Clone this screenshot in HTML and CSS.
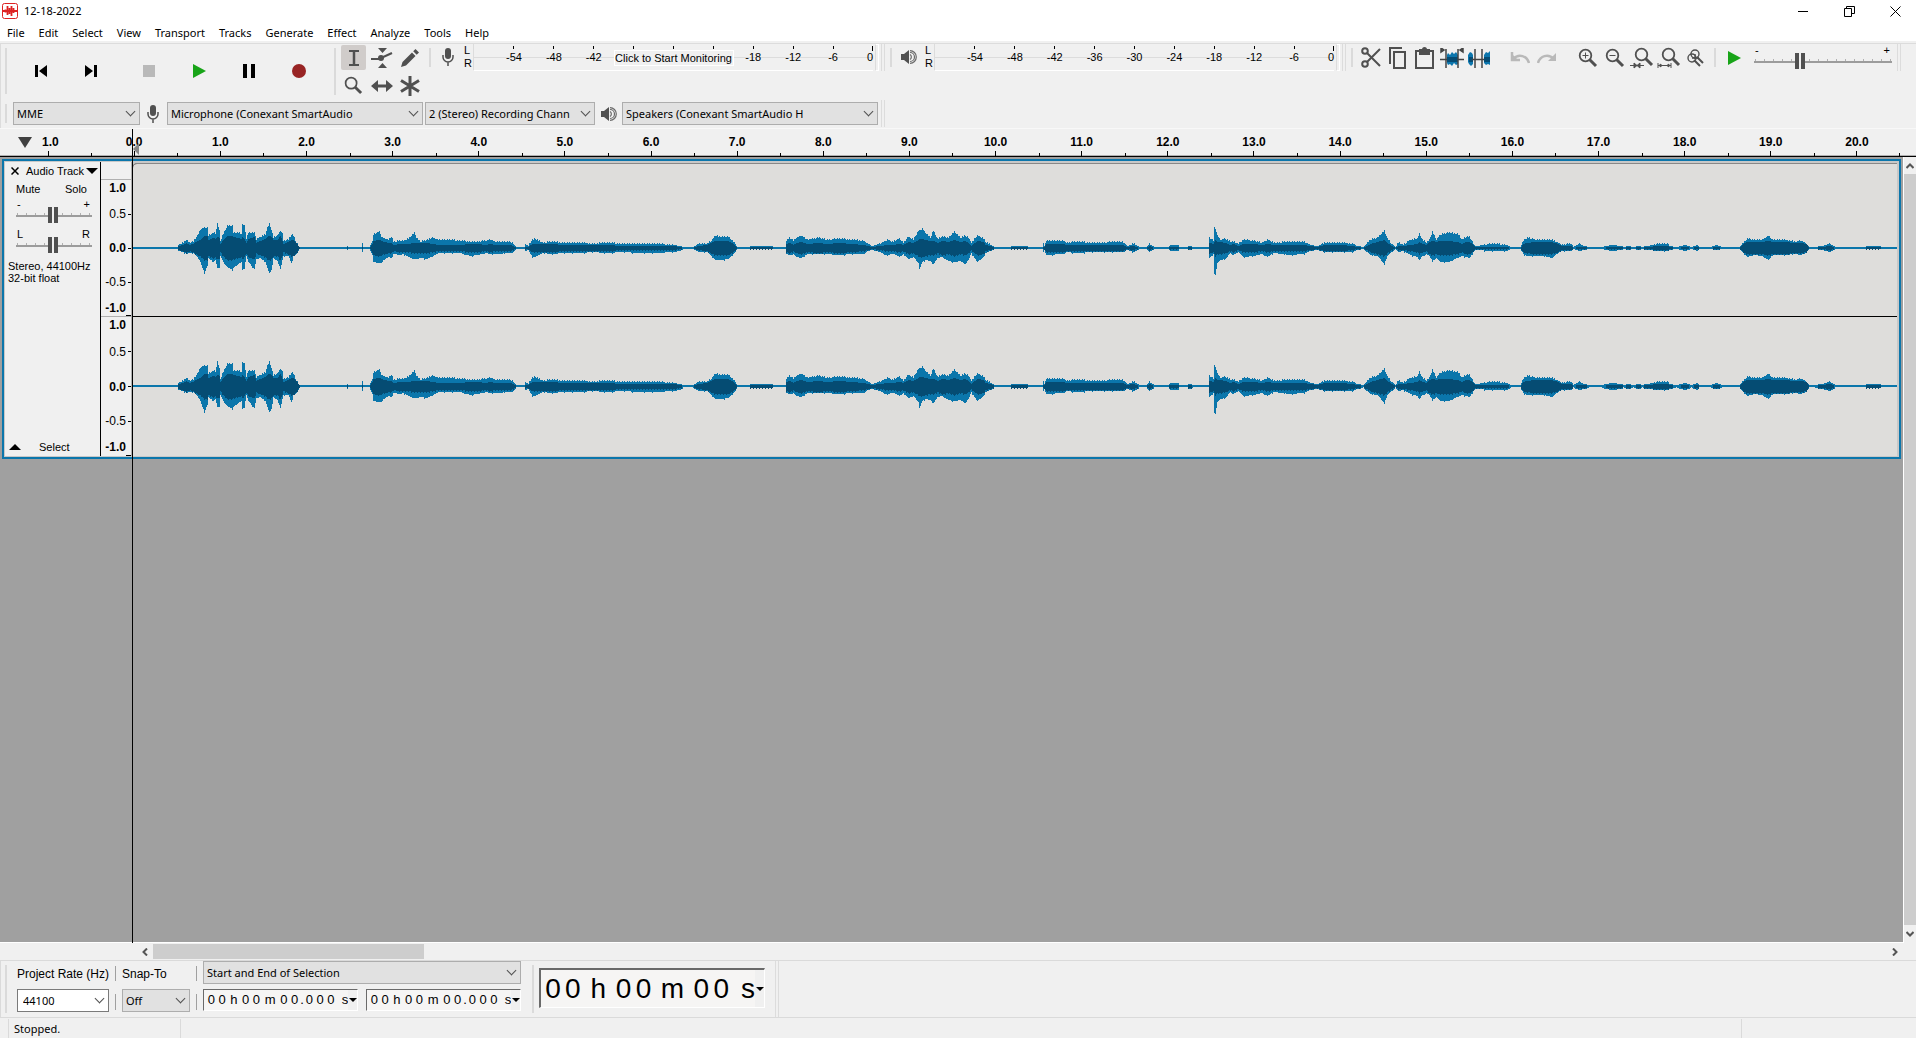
FILE: index.html
```html
<!DOCTYPE html>
<html lang="en">
<head>
    <meta charset="UTF-8">
    <meta name="viewport" content="width=device-width, initial-scale=1.0">
    <title>12-18-2022</title>
    <link rel="stylesheet" href="styles.css">
</head>
<body>

<header class="titlebar">
    <svg class="app-icon" viewBox="0 0 16 16"><rect x="0.5" y="0.5" width="15" height="15" rx="2" fill="#fff" stroke="#d22" /><path d="M1 8h14M3.5 6.500v3M5.500 3v9M7.500 5v6M9.500 3v10M11.500 5v5M13 7v2" stroke="#d22" stroke-width="1.800" fill="none"/></svg>
    <h1>12-18-2022</h1>
    <div class="window-controls">
        <button aria-label="Minimize"><svg width="11" height="11"><path d="M0 5.500h10" stroke="#000"/></svg></button>
        <button aria-label="Restore"><svg width="11" height="11" fill="none" stroke="#000"><path d="M0.500 2.500h7v8h-7zM2.500 2.500v-2h8v7h-3"/></svg></button>
        <button aria-label="Close"><svg width="11" height="11" stroke="#000"><path d="M0.500 0.500l10 10M10.500 0.500l-10 10"/></svg></button>
    </div>
</header>

<nav class="menubar">
    <a href="#">File</a>
    <a href="#">Edit</a>
    <a href="#">Select</a>
    <a href="#">View</a>
    <a href="#">Transport</a>
    <a href="#">Tracks</a>
    <a href="#">Generate</a>
    <a href="#">Effect</a>
    <a href="#">Analyze</a>
    <a href="#">Tools</a>
    <a href="#">Help</a>
</nav>

<!-- shared icons -->
<svg class="defs" width="0" height="0">
    <symbol id="mic" viewBox="0 0 12 18"><rect x="3" y="0" width="6" height="11" rx="3" fill="#505050"/><path d="M1 7v2a5 5 0 0 0 10 0V7M6 14v4" fill="none" stroke="#505050" stroke-width="1.500"/></symbol>
    <symbol id="speaker" viewBox="0 0 16 14"><path d="M0 4h3l5-4v14l-5-4H0z" fill="#505050"/><path d="M9 4.500a3 3 0 0 1 0 5M9 2.500a4.500 4.500 0 0 1 0 9M9 0.700a6.300 6.300 0 0 1 0 12.600" fill="none" stroke="#6a6a6a" stroke-width="1.200"/></symbol>
    <symbol id="lens" viewBox="0 0 20 20"><circle cx="7.500" cy="7.500" r="5.800" fill="none" stroke="#505050" stroke-width="1.800"/><path d="M11.500 11.500l6.500 6.500" stroke="#505050" stroke-width="3"/></symbol>
</svg>

<section class="dock">
    <div class="toolbar-row">
        <div class="transport">
            <span class="grip"></span>
            <button aria-label="Skip to Start"><svg width="12" height="12"><path d="M0 0h3v12H0zM12 0v12L4 6z"/></svg></button>
            <button aria-label="Skip to End"><svg width="12" height="12"><path d="M9 0h3v12H9zM0 0v12l8-6z"/></svg></button>
            <button aria-label="Stop" class="stop"><svg width="12" height="12"><path d="M0 0h12v12H0z" fill="#b9b9b9"/></svg></button>
            <button aria-label="Play"><svg width="13" height="14"><path d="M0 0v14l13-7z" fill="#18a418"/></svg></button>
            <button aria-label="Pause"><svg width="12" height="14"><path d="M0 0h4v14H0zM8 0h4v14H8z"/></svg></button>
            <button aria-label="Record"><svg width="14" height="14"><circle cx="7" cy="7" r="7" fill="#982424"/></svg></button>
        </div>

        <div class="toolset">
            <span class="grip"></span>
            <div class="tools">
                <button class="active" aria-label="Selection Tool"><svg width="12" height="16" fill="none" stroke="#505050"><path d="M1 1h10M1 15h10" stroke-width="2"/><path d="M6 1v14" stroke-width="2.500"/></svg></button>
                <button aria-label="Envelope Tool"><svg width="22" height="22"><path d="M7 1h9l-4.500 5zM7 21h9l-4.500-5z" fill="#505050"/><path d="M0 12h8l13-6" fill="none" stroke="#505050" stroke-width="2.200"/><circle cx="10" cy="11" r="3" fill="#505050"/></svg></button>
                <button aria-label="Draw Tool"><svg width="18" height="18" fill="#505050"><path d="M0 18l1.500-5L11 3.500 14.500 7 5 16.500zM12.200 2.300L14.500 0 18 3.500l-2.300 2.300z"/></svg></button>
                <button aria-label="Zoom Tool"><svg width="19" height="19"><use href="#lens"/></svg></button>
                <button aria-label="Time Shift Tool"><svg width="22" height="12"><path d="M0 6l7-6v4.500h8V0l7 6-7 6V7.500H7V12z" fill="#505050"/></svg></button>
                <button aria-label="Multi-Tool"><svg width="20" height="20" stroke="#505050" stroke-width="3"><path d="M10 0v20M1 4.500l18 11M19 4.500l-18 11"/></svg></button>
            </div>
        </div>

        <div class="bar">
            <span class="grip"></span>
            <button class="meter-icon" aria-label="Record Meter"><svg width="12" height="18"><use href="#mic"/></svg></button>
            <div class="lr"><span>L</span><span>R</span></div>
            <div class="meter">
                <div class="scale"></div>
                <button class="monitor">Click to Start Monitoring</button>
            </div>
            <span class="clip"></span>
            <span class="bar-end"></span>
        </div>

        <div class="bar">
            <span class="grip"></span>
            <button class="meter-icon" aria-label="Playback Meter"><svg width="16" height="14"><use href="#speaker"/></svg></button>
            <div class="lr"><span>L</span><span>R</span></div>
            <div class="meter"><div class="scale"></div></div>
            <span class="clip"></span>
            <span class="bar-end"></span>
        </div>

        <div class="bar edit">
            <span class="grip"></span>
            <div class="group">
                <button aria-label="Cut"><svg width="20" height="21" fill="none" stroke="#505050" stroke-width="2"><circle cx="4" cy="4" r="2.800"/><circle cx="4" cy="17" r="2.800"/><path d="M6 6l13 13M6 15L19 2"/></svg></button>
                <button aria-label="Copy"><svg width="18" height="22" fill="none" stroke="#505050" stroke-width="2"><path d="M1 17V1h12M5 5h11v16H5z"/></svg></button>
                <button aria-label="Paste"><svg width="19" height="22" fill="none" stroke="#505050" stroke-width="2"><path d="M1 4h17v17H1z"/><path d="M5 3h9v4H5z" fill="#505050"/><circle cx="9.500" cy="2.500" r="1.500"/></svg></button>
                <button aria-label="Trim"><svg width="24" height="20"><path d="M7 7l1-2 2 2 2-3 2 2 2-2 2 3v9l-2 1-2-2-2 3-2-2-2 1-1-2z" fill="#0c76ad"/><path d="M7 9h11v5H7z" fill="#064c74"/><path d="M6 1v19M18 1v19M0 11.500h7M18 11.500h6M1 0l3 2-3 2zM23 0l-3 2 3 2z" stroke="#444" fill="#444" stroke-width="1.500"/></svg></button>
                <button aria-label="Silence"><svg width="22" height="20"><path d="M0 7l2-3 2 1 1 2v9l-2 2-2-2-1-2zM16 7l2-3 2 1 2-2v14l-2-1-2 1-2-2z" fill="#0c76ad"/><path d="M1 9h4v5H1zM16 9h6v5h-6z" fill="#064c74"/><path d="M7 1v19M14 1v19M4 11.500h12" stroke="#444" stroke-width="1.500"/></svg></button>
            </div>
            <div class="group">
                <button aria-label="Undo"><svg width="20" height="12"><path d="M2 0v8h8M3 7c6-6 14-3 16 4" fill="none" stroke="#b9b9b9" stroke-width="2.500"/><path d="M1 1v8h8z" fill="#b9b9b9"/></svg></button>
                <button aria-label="Redo"><svg width="20" height="12"><path d="M17 7C11 1 3 4 1 11" fill="none" stroke="#b9b9b9" stroke-width="2.500"/><path d="M19 1v8h-8z" fill="#b9b9b9"/></svg></button>
            </div>
            <div class="group">
                <button aria-label="Zoom In"><svg width="20" height="20"><use href="#lens"/><path d="M4.500 7.500h6M7.500 4.500v6" stroke="#505050"/></svg></button>
                <button aria-label="Zoom Out"><svg width="20" height="20"><use href="#lens"/><path d="M4.500 7.500h6" stroke="#505050"/></svg></button>
                <button aria-label="Fit Selection"><svg width="24" height="22"><use href="#lens" x="4" width="20" height="20"/><path d="M0 18.500h14M4 16l3 2.500L4 21zM10 16l-3 2.500 3 2.500z" stroke="#505050" fill="#505050"/></svg></button>
                <button aria-label="Fit Project"><svg width="24" height="22"><use href="#lens" x="4" width="20" height="20"/><path d="M1 16v5M14 16v5M1 18.500h13M4 17l-2 1.500L4 20zM11 17l2 1.500-2 1.500z" stroke="#505050" fill="#505050"/></svg></button>
                <button aria-label="Zoom Toggle"><svg width="18" height="18" fill="none" stroke="#505050" stroke-width="1.400"><circle cx="8" cy="5" r="4"/><circle cx="5" cy="9" r="4"/><path d="M5 9h7M8 5v5"/><path d="M10 8l6 6M7 11l6 6" stroke-width="2"/></svg></button>
            </div>
        </div>

        <div class="bar speed">
            <span class="grip"></span>
            <button class="play-speed" aria-label="Play-at-Speed"><svg width="13" height="14"><path d="M0 0v14l13-7z" fill="#18a418"/></svg></button>
            <label class="slider">
                <span class="slider-ends"><span>-</span><span>+</span></span>
                <input type="range" min="0" max="100" value="32" aria-label="Playback Speed">
            </label>
            <span class="bar-end"></span>
        </div>
    </div>

    <div class="toolbar-row devices">
        <span class="grip"></span>
        <div class="drop host"><select aria-label="Audio Host"><option>MME</option></select></div>
        <svg class="device-icon" width="12" height="18"><use href="#mic"/></svg>
        <div class="drop"><select aria-label="Recording Device"><option>Microphone (Conexant SmartAudio</option></select></div>
        <div class="drop channels"><select aria-label="Recording Channels"><option>2 (Stereo) Recording Chann</option></select></div>
        <svg class="device-icon speaker" width="16" height="14"><use href="#speaker"/></svg>
        <div class="drop"><select aria-label="Playback Device"><option>Speakers (Conexant SmartAudio H</option></select></div>
        <span class="bar-end"></span>
    </div>
</section>

<main class="project">
    <div class="timeline" id="timeline"></div>

    <div class="workspace">
        <div class="tracks">
            <article class="track">
                <div class="track-panel">
                    <div class="track-title">
                        <button aria-label="Close track"><svg width="8" height="8" stroke="#000" stroke-width="1.500"><path d="M0.500 0.500l7 7M7.500 0.500l-7 7"/></svg></button>
                        <button class="track-name">Audio Track <svg width="12" height="6"><path d="M0 0h12L6 6z"/></svg></button>
                    </div>
                    <div class="mute-solo"><button>Mute</button><button>Solo</button></div>
                    <label class="slider">
                        <span class="slider-ends"><span>-</span><span>+</span></span>
                        <input type="range" min="0" max="100" value="48" aria-label="Gain">
                    </label>
                    <label class="slider pan">
                        <span class="slider-ends"><span>L</span><span>R</span></span>
                        <input type="range" min="0" max="100" value="48" aria-label="Pan">
                    </label>
                    <p>Stereo, 44100Hz<br>32-bit float</p>
                    <div class="track-foot">
                        <button aria-label="Collapse"><svg width="12" height="6"><path d="M0 6h12L6 0z"/></svg></button>
                        <button>Select</button>
                    </div>
                </div>
                <div class="amplitudes">
                    <div class="amp-head"></div>
                    <div class="amp"><b>1.0</b><span>0.5</span><b>0.0</b><span>-0.5</span><b>-1.0</b></div>
                    <div class="amp"><b>1.0</b><span>0.5</span><b>0.0</b><span>-0.5</span><b>-1.0</b></div>
                </div>
                <div class="clip-area">
                    <svg class="wave" viewBox="133 -40 1764 80" preserveAspectRatio="none"></svg>
                    <svg class="wave" viewBox="133 -40 1764 80" preserveAspectRatio="none"></svg>
                </div>
            </article>
        </div>
        <div class="scroll-v">
            <button aria-label="Scroll up"><svg width="8" height="6"><path d="M0.500 5L4 1.500 7.500 5" fill="none" stroke="#555" stroke-width="2"/></svg></button>
            <div class="thumb"></div>
            <button aria-label="Scroll down"><svg width="8" height="6"><path d="M0.500 1L4 4.500 7.500 1" fill="none" stroke="#555" stroke-width="2"/></svg></button>
        </div>
    </div>
    <svg class="play-handle" width="6" height="12"><path d="M6 0v12L0 6z" fill="#888"/></svg>
    <div class="cursor"></div>
</main>

<div class="scroll-h">
    <button aria-label="Scroll left"><svg width="6" height="8"><path d="M5 0.500L1.500 4 5 7.500" fill="none" stroke="#555" stroke-width="2"/></svg></button>
    <div class="rail"><div class="thumb"></div></div>
    <button aria-label="Scroll right"><svg width="6" height="8"><path d="M1 0.500L4.500 4 1 7.500" fill="none" stroke="#555" stroke-width="2"/></svg></button>
</div>

<section class="selection-bar">
    <span class="grip"></span>
    <div class="field rate">
        <label for="rate">Project Rate (Hz)</label>
        <div class="drop combo"><input type="text" id="rate" value="44100"></div>
    </div>
    <div class="divider"></div>
    <div class="field snap">
        <label for="snap">Snap-To</label>
        <div class="drop"><select id="snap"><option>Off</option></select></div>
    </div>
    <div class="divider"></div>
    <div class="field range">
        <div class="drop"><select aria-label="Selection mode"><option>Start and End of Selection</option></select></div>
        <div class="times">
            <div class="time" data-value="00h00m00.000s"></div>
            <div class="time" data-value="00h00m00.000s"></div>
        </div>
    </div>
    <span class="grip"></span>
    <div class="time big" data-value="00h00m00s"></div>
    <span class="bar-end"></span>
</section>

<footer class="statusbar">
    <span class="status">Stopped.</span>
    <span class="message"></span>
    <span class="rate-info"></span>
</footer>

<script>
    // Meter scales
    document.querySelectorAll('.scale').forEach(scale => {
        for (let db = -54; db <= 0; db += 6) {
            const mark = document.createElement('span');
            mark.textContent = db;
            // the monitoring button sits over these
            if (scale.nextElementSibling && db > -42 && db < -18) mark.textContent = '';
            scale.appendChild(mark);
        }
    });

    // Timeline, one cell for each second
    const timeline = document.getElementById('timeline');
    for (let s = -1; s <= 20; s++) {
        const cell = document.createElement('div');
        cell.className = 'second';
        if (s < 0) {
            cell.innerHTML = '<svg width="14" height="11"><path d="M0 0h14L7 11z" fill="#404040"/></svg>';
        }
        cell.append(Math.abs(s).toFixed(1));
        timeline.appendChild(cell);
    }

    // Time controls
    document.querySelectorAll('.time').forEach(time => {
        for (const ch of time.dataset.value) {
            const span = document.createElement('span');
            span.className = /\d/.test(ch) ? 'digit' : ch === '.' ? 'dot' : 'unit-' + ch;
            span.textContent = ch;
            time.appendChild(span);
        }
        time.insertAdjacentHTML('beforeend', '<button aria-label="Time format"><svg width="8" height="4"><path d="M0 0h8L4 4z"/></svg></button>');
    });

    // Waveform envelope: x, peak up, peak down, rms
    const envelope = [
        133,1,1,0, 177,1,1,0, 178,3,3,2, 183,5,4,3, 186,8,6,5, 189,5,5,3, 193,6,5,4, 197,12,9,7, 200,18,14,8, 204,20,25,12, 207,20,18,12, 208,12,10,8,
        213,15,14,10, 215,14,12,9, 217,24,20,11, 219,17,20,10, 220,7,8,4, 223,14,14,8, 227,22,19,12, 232,22,22,12, 233,15,20,11,
        238,15,16,10, 241,14,14,9, 242,23,22,11, 244,22,20,9, 246,9,8,5, 248,15,14,9, 254,15,21,11, 256,8,11,5, 260,11,10,7,
        265,13,14,9, 267,20,20,11, 269,24,25,12, 271,18,22,11, 273,10,10,8, 277,12,13,8, 280,17,21,12, 282,14,12,7, 283,7,8,4,
        288,8,8,6, 291,13,15,8, 293,12,8,8, 296,5,6,5, 299,1,1,1, 300,1,1,0, 346,1,1,0, 347,2,2,1, 348,1,1,0, 361,1,1,0,
        362,4,4,1, 363,1,1,0, 369,1,1,0, 370,3,3,1, 372,6,6,4, 373,13,14,7, 379,16,15,8, 381,11,15,7, 384,9,11,6, 388,8,9,5,
        391,11,10,5, 393,6,6,3, 400,7,7,4, 403,7,6,4, 408,9,9,4, 414,15,11,5, 416,10,11,5, 420,6,10,5, 427,8,11,5, 432,10,8,4,
        438,8,5,3, 448,8,5,3, 460,7,5,3, 470,6,8,4, 477,6,7,4, 485,7,5,3, 490,8,6,4, 495,6,6,3, 510,6,5,3, 513,4,4,2, 516,1,1,0,
        524,1,1,0, 525,4,3,1, 528,2,2,1, 532,8,9,4, 535,9,9,4, 542,5,5,4, 552,6,6,4, 563,5,5,3, 580,5,5,3, 593,4,4,3, 605,5,5,3,
        623,4,4,2, 638,4,5,2, 653,4,5,2, 673,3,4,2, 680,2,3,1, 683,1,1,0, 692,1,1,0, 695,2,2,1, 698,4,4,2, 707,4,4,3, 711,7,8,5,
        715,12,12,7, 720,11,12,7, 728,11,11,7, 733,6,6,4, 737,1,1,0, 749,1,1,0, 751,2,1,1, 771,2,1,1, 773,1,1,0, 785,1,1,0,
        786,7,6,4, 789,10,7,5, 793,7,6,3, 796,10,9,5, 801,12,10,6, 807,8,6,4, 818,10,6,5, 827,8,6,4, 838,9,7,5, 852,8,6,4,
        863,7,6,3, 867,4,3,2, 872,2,2,1, 880,4,4,2, 887,8,8,3, 892,6,5,3, 899,9,9,4, 903,5,6,3, 908,11,11,6, 913,8,9,5,
        918,17,15,8, 919,17,21,9, 922,19,14,9, 925,15,12,8, 930,10,13,7, 933,17,16,7, 937,9,10,5, 942,11,9,7, 948,10,13,6,
        954,16,14,8, 960,10,13,6, 965,12,16,7, 968,10,12,5, 971,5,5,2, 977,12,14,7, 983,9,9,6, 985,6,5,3, 990,3,3,2, 994,1,1,0,
        1010,1,1,0, 1012,2,1,1, 1027,2,1,1, 1028,1,1,0, 1042,1,1,0, 1043,5,4,1, 1044,2,2,1, 1046,7,7,4, 1062,7,6,4, 1067,5,4,3,
        1075,6,5,3, 1093,5,4,3, 1122,6,4,3, 1127,2,2,1, 1133,4,4,2, 1139,1,1,0, 1146,1,1,0, 1149,4,4,2, 1154,1,1,0, 1168,1,1,0,
        1170,3,3,1, 1178,3,3,1, 1179,1,1,0, 1187,1,1,0, 1189,2,2,1, 1193,1,1,0, 1208,1,1,0, 1209,10,10,5, 1213,7,6,4, 1214,20,26,6,
        1215,19,27,8, 1217,12,15,6, 1220,8,12,6, 1225,9,11,5, 1230,6,5,3, 1233,6,7,4, 1238,4,4,2, 1243,8,9,4, 1253,7,8,4, 1262,5,6,3,
        1267,8,9,4, 1273,5,5,3, 1290,6,7,3, 1303,6,6,3, 1310,3,3,2, 1317,2,2,1, 1325,5,4,3, 1340,5,4,3, 1352,4,4,2, 1357,2,2,1,
        1363,1,1,0, 1370,8,7,4, 1377,10,8,6, 1384,17,16,8, 1387,9,8,5, 1391,4,4,2, 1395,1,1,0, 1398,5,4,2, 1403,3,3,2, 1410,8,7,3,
        1417,9,9,4, 1419,14,12,6, 1422,8,8,4, 1426,5,6,3, 1429,8,8,6, 1432,16,13,7, 1436,8,10,6, 1440,13,14,7, 1448,15,14,7,
        1457,14,10,6, 1462,8,8,4, 1466,11,9,6, 1469,11,10,6, 1473,4,4,3, 1475,2,2,1, 1492,4,3,1, 1506,3,3,1, 1511,1,1,0, 1520,1,1,0,
        1523,7,6,4, 1527,10,8,5, 1535,8,8,6, 1544,8,8,6, 1551,8,10,6, 1558,5,5,4, 1561,3,3,2, 1571,4,3,2, 1573,1,1,0, 1579,4,3,1,
        1584,2,2,1, 1589,1,1,0, 1601,1,1,0, 1611,3,3,1, 1622,2,2,1, 1623,1,1,0, 1628,2,2,1, 1633,1,1,0, 1638,2,2,1, 1642,1,1,0,
        1646,2,2,1, 1659,4,3,2, 1668,4,3,2, 1669,2,2,1, 1676,1,1,0, 1685,3,3,1, 1691,1,1,0, 1697,3,3,1, 1699,1,1,0, 1710,1,1,0,
        1716,3,2,1, 1722,1,1,0, 1739,1,1,0, 1743,5,5,4, 1747,9,9,6, 1753,8,7,6, 1762,8,8,6, 1768,12,12,7, 1772,8,7,6, 1783,8,7,6,
        1795,6,6,5, 1801,7,7,5, 1806,4,4,4, 1809,1,1,0, 1814,1,1,0, 1822,2,2,1, 1830,4,4,2, 1835,1,1,0, 1863,1,1,0, 1868,2,1,1,
        1880,2,1,1, 1881,1,1,0, 1897,1,1,0
    ];

    function drawWave(svg, base) {
        let peaks = '', rms = '', i = 0;
        for (let x = 133; x < 1897; x++) {
            while (envelope[i + 4] <= x) i += 4;
            const t = (x - envelope[i]) / (envelope[i + 4] - envelope[i]);
            const at = k => envelope[i + k] + (envelope[i + 4 + k] - envelope[i + k]) * t;
            // small ragged edge on the louder parts
            const rag = at(1) > 3 ? (x * 7 % 5 > 2 ? 1 : 0) : 0;
            const up = at(1) <= 1 ? 1 : Math.round(at(1)) + rag;
            const down = at(2) <= 1 ? base : Math.round(at(2)) + (x * 3 % 4 === 0 ? rag : 0);
            const r = Math.round(at(3));
            peaks += `M${x} ${-up}h1V${down}h-1z`;
            if (r) rms += `M${x} ${-r}h1V${r + (x % 3 ? 0 : 1)}h-1z`;
        }
        svg.innerHTML = `<path d="${peaks}" fill="#0b76ab"/><path d="${rms}" fill="#054c73"/>`;
    }

    const waves = document.querySelectorAll('.wave');
    drawWave(waves[0], 1);
    drawWave(waves[1], 0);
</script>

</body>
</html>
```

FILE: styles.css
```css
* {
    box-sizing: border-box;
}

body {
    margin: 0;
    height: 100vh;
    display: flex;
    flex-direction: column;
    overflow: hidden;
    background: #f0f0f0;
    color: #000;
    font: 11px/14px "Noto Sans", sans-serif;
}

button {
    display: flex;
    align-items: center;
    justify-content: center;
    padding: 0;
    border: none;
    background: none;
    color: #000;
    font: 11px/12px "Liberation Sans", Arial, sans-serif;
}

svg {
    flex: none;
}

.defs {
    position: absolute;
}

/* Title and menu */
.titlebar {
    display: flex;
    align-items: center;
    height: 22px;
    padding-left: 2px;
    background: #fff;
}

.app-icon {
    width: 16px;
    height: 16px;
}

.titlebar h1 {
    margin: 0 auto 0 6px;
    font-size: 11px;
    line-height: 14px;
    font-weight: normal;
}

.window-controls {
    display: flex;
    margin-right: -2px;
}

.window-controls button {
    width: 46px;
    height: 20px;
}

.menubar {
    display: flex;
    gap: 14px;
    height: 19px;
    padding: 4px 7px 1px;
    background: #fff;
}

.menubar a {
    color: #000;
    text-decoration: none;
}

/* Toolbars */
.dock {
    margin-top: 2px;
    border-top: 1px solid #dcdcdc;
    border-left: 1px solid #dcdcdc;
}

.toolbar-row {
    display: flex;
    align-items: flex-start;
    height: 56px;
}

.grip {
    flex: none;
    width: 2px;
    margin: 4px 0;
    background: #dadada;
}

.bar-end {
    flex: none;
    width: 4px;
    border: solid #dcdcdc;
    border-width: 0 1px;
}

.transport {
    display: flex;
    gap: 2px;
    height: 54px;
    padding-left: 4px;
}

.transport .grip {
    margin-right: 8px;
}

.transport button {
    width: 48px;
}

.transport .stop {
    margin-left: 8px;
}

.toolset {
    display: flex;
    height: 55px;
    margin-left: 11px;
}

.tools {
    display: grid;
    grid-template-columns: repeat(3, 25px);
    grid-auto-rows: 25px;
    gap: 3px;
    padding: 1px 7px 0 5px;
}

.tools .active {
    background: #d0ccca;
    border-radius: 2px;
}

.bar {
    display: flex;
    height: 27px;
}

.bar + .bar {
    margin-left: 5px;
}

.meter-icon {
    width: 24px;
    margin: 0 4px 2px 5px;
}

.lr {
    display: flex;
    flex-direction: column;
    width: 9px;
    font: 11px/13px "Liberation Sans", Arial, sans-serif;
}

.meter {
    position: relative;
    width: 400px;
    border-left: 1px solid #dcdcdc;
    border-bottom: 1px solid #fff;
    background: linear-gradient(#dcdcdc, #dcdcdc) 0 13px / 100% 1px no-repeat;
}

.scale {
    display: grid;
    grid-template-columns: repeat(9, 2fr) 1fr;
    height: 100%;
    padding-left: 20px;
    font: 11px/12px "Liberation Sans", Arial, sans-serif;
    text-align: center;
}

.scale span {
    padding-top: 7px;
    background: linear-gradient(#000, #000) 50% 2px / 1px 3px no-repeat;
}

.scale span:last-child {
    text-align: right;
    background-position: 100% 2px;
    background-size: 1px 5px;
}

.monitor {
    position: absolute;
    top: 6px;
    left: 50%;
    height: 16px;
    width: 120px;
    transform: translateX(-50%);
    border: 1px solid #fff;
    background: #f0f0f0;
    white-space: nowrap;
}

.clip {
    width: 4px;
    margin: 0 2px;
    border: 1px solid #fff;
    border-left-color: #dcdcdc;
}

.edit .group {
    display: flex;
    margin-left: 14px;
}

.edit .grip + .group {
    margin-left: 4px;
}

.edit .group button {
    width: 27px;
}

.play-speed {
    width: 26px;
    margin: 0 7px 0 5px;
}

.speed .slider {
    width: 138px;
    margin-right: 5px;
}

/* Sliders */
.slider {
    display: flex;
    flex-direction: column;
    font: 11px/12px "Liberation Sans", Arial, sans-serif;
}

.slider-ends {
    display: flex;
    justify-content: space-between;
    padding: 0 2px 0 1px;
}

.slider input {
    appearance: none;
    width: 100%;
    height: 16px;
    margin: -3px 0 0;
    background:
        linear-gradient(#9c9c9c, #9c9c9c) 0 8px / 100% 2px no-repeat,
        repeating-linear-gradient(90deg, transparent 0 1px, #b0b0b0 1px 2px, transparent 2px 9px) 0 6px / 100% 2px no-repeat;
}

.slider input::-webkit-slider-thumb {
    appearance: none;
    width: 10px;
    height: 16px;
    background: linear-gradient(90deg, #505050 4px, #f0f0f0 4px 6px, #505050 6px);
}

/* Drop-downs */
.toolbar-row.devices {
    align-items: center;
    height: 28px;
    padding: 0 0 1px 4px;
}

.devices .grip {
    height: 19px;
    margin-right: 6px;
}

.devices .bar-end {
    height: 27px;
    margin-left: 3px;
}

.drop {
    position: relative;
    width: 256px;
    height: 23px;
}

.drop::after {
    content: "";
    position: absolute;
    top: 6px;
    right: 6px;
    width: 6px;
    height: 6px;
    border: solid #505050;
    border-width: 0 1px 1px 0;
    transform: rotate(45deg);
    pointer-events: none;
}

.drop select,
.drop input {
    appearance: none;
    display: block;
    width: 100%;
    height: 100%;
    margin: 0;
    padding: 0 3px;
    border: 1px solid #adadad;
    border-radius: 0;
    background: #e1e1e1;
    color: #000;
    font: 11px/14px "Noto Sans", sans-serif;
}

.drop input {
    padding-left: 5px;
    border-color: #7a7a7a;
    background: #fff;
}

.drop.host {
    width: 127px;
}

.drop.channels {
    width: 170px;
    margin-left: 2px;
}

.device-icon {
    margin: 0 8px 0 7px;
}

.device-icon.speaker {
    margin: 0 5px 0 6px;
}

/* Timeline and tracks */
.project {
    position: relative;
    flex: 1;
    min-height: 0;
    display: flex;
    flex-direction: column;
    border-top: 1px solid #f8f8f8;
}

.timeline {
    display: grid;
    grid-template-columns: repeat(22, 1fr);
    height: 28px;
    padding: 0 16px 0 5px;
    border-bottom: 1px solid #000;
    box-shadow: inset 0 -1px #b0b0b0;
    font: bold 12px/26px "Liberation Sans", Arial, sans-serif;
    text-align: center;
}

/* half-second tick on the left edge, whole second in the middle */
.second {
    background:
        linear-gradient(#000, #000) 50% 22px / 1px 5px no-repeat,
        linear-gradient(#000, #000) 0 24px / 1px 3px no-repeat;
}

.second:first-child {
    display: flex;
    align-items: center;
    gap: 10px;
    padding: 0 0 1px 13px;
    background-size: 1px 5px, 0 0;
}

.second:last-child {
    background:
        linear-gradient(#000, #000) 50% 22px / 1px 5px no-repeat,
        linear-gradient(#000, #000) 0 24px / 1px 3px no-repeat,
        linear-gradient(#000, #000) 100% 24px / 1px 3px no-repeat;
}

.workspace {
    flex: 1;
    min-height: 0;
    display: flex;
}

.tracks {
    flex: 1;
    padding: 2px;
    border-right: 1px solid #fff;
    border-bottom: 1px solid #fff;
    background: #a0a0a0;
}

.track {
    display: flex;
    height: 300px;
    padding: 1px 0 1px 1px;
    border: 2px solid #0b76ab;
    background: #c8c8c8;
}

.track-panel {
    display: flex;
    flex-direction: column;
    width: 96px;
    border-right: 1px solid #000;
    background: #f0f0f0;
    font: 11px/12px "Liberation Sans", Arial, sans-serif;
}

.track-title {
    display: flex;
    height: 18px;
    padding-left: 6px;
    gap: 7px;
}

.track-name {
    gap: 2px;
    white-space: nowrap;
}

.mute-solo {
    display: flex;
    justify-content: space-between;
    padding: 3px 13px 3px 11px;
}

.track-panel .slider {
    width: 76px;
    margin: 0 0 0 11px;
}

.track-panel .slider.pan {
    margin-top: 5px;
}

.track-panel p {
    margin: 7px 0 0 3px;
    white-space: nowrap;
}

.track-foot {
    display: flex;
    gap: 18px;
    margin-top: auto;
    padding: 0 4px 3px;
}

.amplitudes {
    display: grid;
    grid-template-rows: 18px 137px 139px;
    width: 31px;
    border-right: 1px solid #b0b0b0;
    background: #f0f0f0;
    font: 12px/14px "Liberation Sans", Arial, sans-serif;
}

.amp-head,
.amp:nth-child(2) {
    border-bottom: 1px solid #b0b0b0;
}

.amp {
    display: grid;
    grid-template-rows: 1fr 2fr 2fr 2fr 1fr;
    align-items: center;
    text-align: right;
}

.amp > * {
    display: flex;
    align-items: center;
    justify-content: flex-end;
    height: 100%;
    padding-right: 5px;
    background: linear-gradient(#000, #000) 100% 50% / 3px 1px no-repeat;
}

.amp > :first-child {
    padding-bottom: 2px;
    background: none;
}

.amp > :last-child {
    background-position: 100% 100%;
    background-size: 5px 1px;
}

.clip-area {
    flex: 1;
    min-width: 0;
    display: grid;
    grid-template-rows: 152px 139px;
    gap: 1px;
    margin: 1px 2px 0 1px;
    border-top: 1px solid #888;
    border-top-left-radius: 4px;
    background: #000;
}

.wave {
    display: block;
    width: 100%;
    height: 100%;
    padding: 29px 0;
    background: #dedddb;
    shape-rendering: crispEdges;
}

.wave:first-child {
    padding: 44px 0 28px;
    border-top-left-radius: 4px;
}

.cursor {
    position: absolute;
    top: 0;
    bottom: 0;
    left: 132px;
    width: 1px;
    background: #000;
}

.play-handle {
    position: absolute;
    top: 14px;
    left: 133px;
}

/* Scrollbars */
.scroll-v {
    display: flex;
    flex-direction: column;
    width: 12px;
}

.scroll-v button {
    height: 17px;
}

.scroll-v .thumb {
    flex: 1;
    background: #cdcdcd;
}

.scroll-v button:last-child {
    margin-bottom: 1px;
}

.scroll-h {
    display: flex;
    height: 17px;
    padding: 0 13px 0 136px;
}

.scroll-h button {
    width: 17px;
}

.scroll-h .rail {
    flex: 1;
}

.scroll-h .thumb {
    width: 271px;
    height: 15px;
    margin-top: 1px;
    background: #cdcdcd;
}

/* Selection toolbar */
.selection-bar {
    display: flex;
    height: 58px;
    padding-left: 4px;
    border: solid #dadada;
    border-width: 1px 0 1px 1px;
}

.field {
    display: flex;
    flex-direction: column;
    gap: 5px;
}

.field label {
    height: 23px;
    font: 12px/26px "Liberation Sans", Arial, sans-serif;
    white-space: nowrap;
}

.field .drop {
    width: 100%;
}

.rate {
    width: 92px;
    margin-left: 10px;
}

.snap {
    width: 68px;
}

.range {
    width: 318px;
    margin-right: 11px;
}

.divider {
    width: 1px;
    margin: 5px 6px 7px;
    background: linear-gradient(#a0a0a0 15px, transparent 15px 28px, #a0a0a0 28px);
}

.times {
    display: flex;
    justify-content: space-between;
}

.time {
    display: flex;
    align-items: center;
    width: 155px;
    height: 22px;
    padding-left: 2px;
    border: 1px solid #fff;
    border-top: 1px solid #6a6a6a;
    border-left: 1px solid #6a6a6a;
    background: #f6f5f4;
    font: 13px/20px "Liberation Sans", Arial, sans-serif;
}

.time span {
    text-align: center;
}

.time .digit {
    width: 11px;
}

.time .dot {
    width: 4px;
}

.time .unit-h {
    width: 13px;
}

.time .unit-m {
    width: 17px;
}

.time .unit-s {
    width: 12px;
    text-align: right;
}

.time button {
    width: 9px;
    align-self: stretch;
    margin-left: auto;
    background: #f0f0f0;
}

.time.big {
    width: 226px;
    height: 40px;
    margin: 7px 10px 0 5px;
    border-width: 2px 1px 1px 2px;
    padding-left: 2px;
    font-size: 28px;
}

.big .digit {
    width: 20px;
}

.big .unit-h {
    width: 31px;
}

.big .unit-m {
    width: 38px;
}

.big .unit-s {
    width: 24px;
}

/* Status bar */
.statusbar {
    display: flex;
    height: 20px;
    padding-left: 8px;
    line-height: 20px;
}

.statusbar span {
    border-left: 1px solid #dadada;
    margin-top: 1px;
}

.status {
    width: 172px;
    padding-left: 5px;
}

.message {
    flex: 1;
}

.rate-info {
    width: 175px;
}
```
